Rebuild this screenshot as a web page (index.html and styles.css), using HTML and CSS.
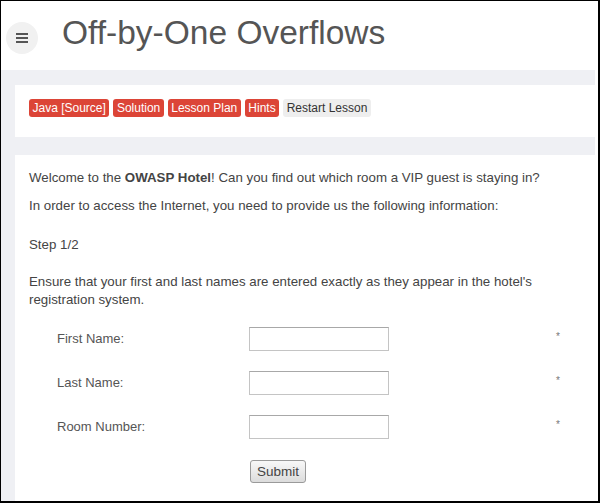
FILE: index.html
```html
<!DOCTYPE html>
<html>
<head>
<meta charset="utf-8">
<link rel="stylesheet" href="styles.css">
</head>
<body>
<div class="frame">
  <header class="header">
    <div class="menu-btn"><span></span><span></span><span></span></div>
    <h1 class="title">Off-by-One Overflows</h1>
  </header>
  <main class="main">
    <section class="card toolbar">
      <span class="btn red">Java [Source]</span>
      <span class="btn red">Solution</span>
      <span class="btn red">Lesson Plan</span>
      <span class="btn red">Hints</span>
      <span class="btn plain">Restart Lesson</span>
    </section>
    <section class="card content">
      <p class="p1">Welcome to the <b>OWASP Hotel</b>! Can you find out which room a VIP guest is staying in?</p>
      <p class="p2">In order to access the Internet, you need to provide us the following information:</p>
      <p class="p3">Step 1/2</p>
      <p class="p4">Ensure that your first and last names are entered exactly as they appear in the hotel's registration system.</p>
      <form class="form">
        <label class="lbl">First Name:</label><input class="inp" type="text"><span class="req">*</span>
        <label class="lbl">Last Name:</label><input class="inp" type="text"><span class="req">*</span>
        <label class="lbl">Room Number:</label><input class="inp" type="text"><span class="req">*</span>
        <span class="lbl"></span><div class="submit-cell"><button type="button" class="submit">Submit</button></div><span></span>
      </form>
    </section>
  </main>
</div>
</body>
</html>
```
FILE: styles.css
```css
html, body {
  margin: 0;
  padding: 0;
  background: #fff;
}
.frame {
  width: 597px;
  height: 500px;
  border-style: solid;
  border-color: #000;
  border-width: 1px 2px 2px 1px;
  overflow: hidden;
  font-family: "Liberation Sans", Arial, sans-serif;
  color: #444;
  background: #fff;
}
.header {
  height: 69px;
  display: flex;
  align-items: flex-start;
  background: #fff;
}
.menu-btn {
  width: 32px;
  height: 32px;
  border-radius: 50%;
  background: #f1f1f1;
  margin: 21px 0 0 5px;
  display: flex;
  flex-direction: column;
  justify-content: center;
  align-items: center;
  gap: 2px;
}
.menu-btn span {
  display: block;
  width: 12px;
  height: 2px;
  background: #555;
}
.title {
  margin: 12px 0 0 24px;
  font-size: 33.5px;
  line-height: 40px;
  font-weight: normal;
  color: #555;
}
.main {
  background: #eff0f4;
  margin-right: 3px;
  padding: 15px 0 0 14px;
  height: 416px;
}
.card {
  background: #fff;
}
.toolbar {
  height: 52px;
  box-sizing: border-box;
  padding: 14px 14px 0 14px;
  display: flex;
  gap: 4px;
  align-items: flex-start;
}
.btn {
  height: 18px;
  line-height: 18px;
  padding: 0 3.5px;
  font-size: 12px;
  border-radius: 3px;
}
.btn.red {
  background: #dc4537;
  color: #fff;
}
.btn.plain {
  background: #eeeeee;
  color: #333;
}
.content {
  margin-top: 18px;
  height: 360px;
  box-sizing: border-box;
  padding: 14px 14px 0 14px;
  font-size: 13.3px;
  line-height: 18px;
}
.content p {
  margin: 0;
}
.p1 { margin-bottom: 10px !important; }
.p2 { margin-bottom: 21px !important; }
.p3 { margin-bottom: 19px !important; }
.p4 { margin-bottom: 8px !important; width: 530px; }
.form {
  display: grid;
  grid-template-columns: 192px 140px 1fr;
  grid-auto-rows: 44px;
  align-items: center;
  margin-left: 28px;
}
.lbl {
  color: #555;
  font-size: 13px;
}
.inp {
  box-sizing: border-box;
  width: 140px;
  height: 24px;
  margin: 0;
  border: 1px solid #c4c4c4;
  border-top-color: #a8a8a8;
  background: #fff;
  padding: 0 3px;
}
.req {
  align-self: center;
  margin-left: 167px;
  font-size: 10px;
  color: #777;
  line-height: 10px;
  position: relative;
  top: -2px;
}
.submit-cell {
  grid-row: 4;
  grid-column: 2;
  align-self: center;
  padding-left: 1px;
}
.submit {
  width: 56px;
  height: 23px;
  padding: 0;
  font-family: "Liberation Sans", Arial, sans-serif;
  font-size: 13.5px;
  color: #444;
  border: 1px solid #9a9a9a;
  border-radius: 3px;
  background: linear-gradient(#f8f8f8, #dcdcdc);
}
```
